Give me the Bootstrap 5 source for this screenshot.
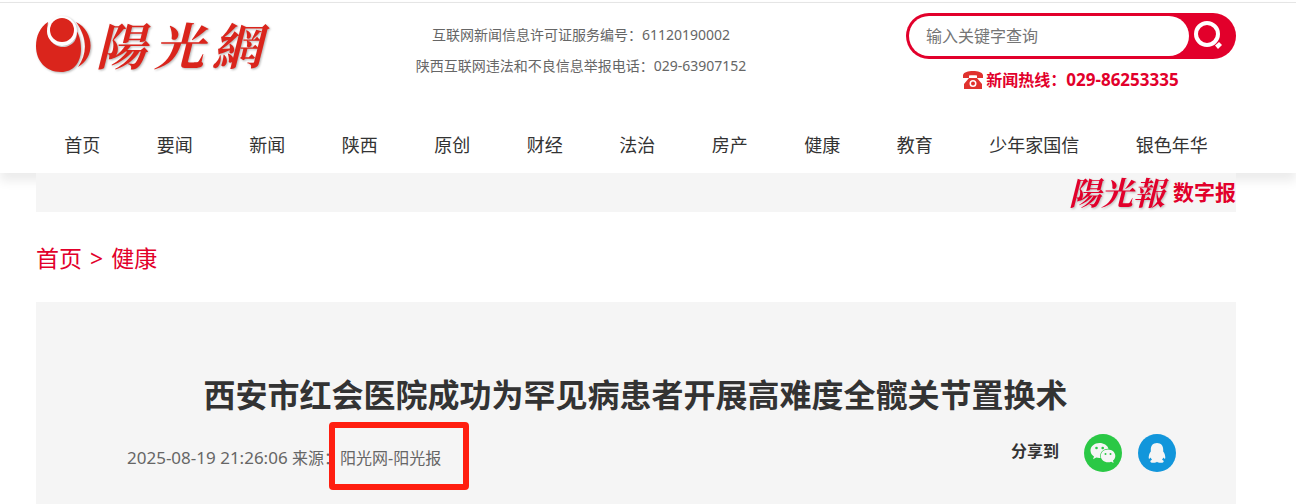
<!DOCTYPE html>
<html lang="zh-CN">
<head>
<meta charset="utf-8">
<meta name="viewport" content="width=device-width, initial-scale=1">
<title>阳光网 - 健康</title>
<link href="https://cdn.jsdelivr.net/npm/bootstrap@5.3.0/dist/css/bootstrap.min.css" rel="stylesheet">
<style>
  :root { --brand: #e2002b; --panel: #f5f5f5; }
  body { font-family: "Noto Sans", "Noto Sans CJK SC", sans-serif; color: #333; background: #fff; font-size: 16px; line-height: 24px; }
  a { text-decoration: none; color: inherit; }
  .page-wrap { padding-left: 36px; padding-right: 60px; }
  .site-header { border-top: 1px solid #e5e5e5; margin-top: 2px; background: #fff; box-shadow: 0 8px 10px rgba(0,0,0,.08); }
  .header-top { padding-top: 10px; height: 115px; }
  .brand-logo { width: 360px; color: #da251c; filter: drop-shadow(1px 1px 1px rgba(0,0,0,.3)); }
  .brush { font-family: "Noto Serif CJK TC", "Noto Sans CJK TC", sans-serif; font-style: italic; font-weight: 700; }
  .brand-word { font-size: 50px; line-height: 60px; gap: 8px; }
  .license { width: 370px; font-size: 14px; line-height: 31px; color: #666; padding-top: 6px; }
  .search-box { width: 330px; height: 46px; background: var(--brand); padding: 3px; }
  .search-box .form-control { width: 280px; flex: none; height: 40px; padding: 0 17px; border: 0; color: #757575; }
  .search-box .form-control::placeholder { color: #757575; }
  .hotline { color: var(--brand); font-weight: 700; padding-top: 9px; gap: 3px; }
  .latin { font-size: 17px; }
  .main-nav { font-size: 18px; height: 55px; padding-top: 14px; }
  .main-nav .nav-link { padding: 0; color: #333; line-height: 27px; }
  .epaper { background: var(--panel); height: 39px; color: var(--brand); gap: 8px; }
  .epaper .brush { font-size: 32px; line-height: 36px; filter: drop-shadow(1px 1px 1px rgba(0,0,0,.25)); }
  .epaper-label { font-size: 21px; font-weight: 700; line-height: 39px; }
  .crumbs { font-size: 23px; line-height: 34px; color: var(--brand); padding-top: 29px; gap: 8px; margin-bottom: 27px; }
  .article { background: var(--panel); padding: 69px 60px 32px 91px; min-height: 202px; }
  .article h1 { font-size: 32px; line-height: 48px; font-weight: 700; margin: 0 0 15px; padding-right: 32px; text-align: center; }
  .meta { color: #666; padding-top: 12px; }
  .highlight { position: absolute; top: -24px; bottom: -20px; left: -11px; right: -28px; border: 6px solid #ff1e10; border-radius: 4px; pointer-events: none; }
  .share-label { font-weight: 700; line-height: 34px; margin-right: 25px; }
</style>
</head>
<body>
<header class="site-header">
  <div class="page-wrap">
    <div class="header-top d-flex">
      <a href="#" class="brand-logo d-flex align-items-start">
        <svg width="56" height="62" viewBox="0 0 56 62" aria-hidden="true">
          <path d="M12 9C4 14 0 23 0 33C0 48 10 59 25 59C37 59 45 50 45 36C45 28 43 21 40 17C43 26 36 34 27 34C17 34 9 24 12 9Z" fill="#da251c"/>
          <circle cx="26" cy="18" r="15" fill="#fff"/>
          <circle cx="26" cy="17" r="12" fill="#da251c"/>
          <path d="M40 9C58 18 60 44 42 54C52 40 51 24 40 9Z" fill="#da251c"/>
        </svg>
        <span class="brush brand-word d-flex ms-1"><span>陽</span><span>光</span><span>網</span></span>
      </a>
      <div class="license text-center">
        <div>互联网新闻信息许可证服务编号：61120190002</div>
        <div>陕西互联网违法和不良信息举报电话：029-63907152</div>
      </div>
      <div class="ms-auto">
        <form class="search-box rounded-pill d-flex">
          <input type="search" class="form-control rounded-pill" placeholder="输入关键字查询" aria-label="输入关键字查询">
          <button type="submit" class="btn p-0 border-0" aria-label="搜索">
            <svg class="d-block" width="36" height="40" viewBox="0 0 36 40" aria-hidden="true">
              <circle cx="18" cy="18" r="11" fill="none" stroke="#fff" stroke-width="4"/>
              <path d="M26 29.500L30 26L33 29L29 33Z" fill="#fff"/>
            </svg>
          </button>
        </form>
        <div class="hotline d-flex align-items-center justify-content-center">
          <svg width="20" height="20" viewBox="0 0 20 20" fill="#e0322e" aria-hidden="true">
            <path d="M0 8V5C1 2 5 1 10 1S19 2 20 5V8H14V5.500C12 5 8 5 6 5.500V8Z"/>
            <path fill-rule="evenodd" d="M6 8H14L19 14V19H1V14ZM10 10A3.500 3.500 0 1 0 10 17A3.500 3.500 0 1 0 10 10Z"/>
            <circle cx="10" cy="13.500" r="2"/>
          </svg>
          <span>新闻热线：<span class="latin">029-86253335</span></span>
        </div>
      </div>
    </div>
    <nav class="main-nav nav justify-content-around flex-nowrap text-nowrap">
      <a class="nav-link" href="#">首页</a>
      <a class="nav-link" href="#">要闻</a>
      <a class="nav-link" href="#">新闻</a>
      <a class="nav-link" href="#">陕西</a>
      <a class="nav-link" href="#">原创</a>
      <a class="nav-link" href="#">财经</a>
      <a class="nav-link" href="#">法治</a>
      <a class="nav-link" href="#">房产</a>
      <a class="nav-link" href="#">健康</a>
      <a class="nav-link" href="#">教育</a>
      <a class="nav-link" href="#">少年家国信</a>
      <a class="nav-link" href="#">银色年华</a>
    </nav>
  </div>
</header>
<main class="page-wrap">
  <a href="#" class="epaper position-relative d-flex justify-content-end">
    <span class="brush">陽光報</span>
    <span class="epaper-label">数字报</span>
  </a>
  <nav class="crumbs d-flex" aria-label="当前位置">
    <a href="#">首页</a><span>&gt;</span><a href="#">健康</a>
  </nav>
  <article class="article">
    <h1>西安市红会医院成功为罕见病患者开展高难度全髋关节置换术</h1>
    <div class="d-flex justify-content-between">
      <div class="meta"><span class="latin">2025-08-19 21:26:06 </span>来源：<span class="position-relative d-inline-block">阳光网-阳光报<span class="highlight"></span></span></div>
      <div class="d-flex">
        <span class="share-label">分享到</span>
        <a href="#" class="me-3" aria-label="微信">
          <svg class="d-block" width="38" height="38" viewBox="0 0 38 38" aria-hidden="true">
            <circle cx="19" cy="19" r="19" fill="#2ac845"/>
            <path d="M15.500 9C10.500 9 6.500 12.200 6.500 16.500C6.500 19 7.800 21 10 22.500L9 25.200L12.300 23.600Q14.500 24.300 16.500 24C15 19 19 14.500 24.500 14.700C23.500 11.300 19.800 9 15.500 9Z" fill="#f5f5f5"/>
            <path d="M24 15.500C19.800 15.500 16.800 18.300 16.800 21.900C16.800 25.500 20 28.200 24 28.200Q25.800 28.200 27.200 27.700L29.600 29L29 26.500C30.500 25.400 31.300 23.700 31.300 21.900C31.300 18.300 28 15.500 24 15.500Z" fill="#f5f5f5"/>
            <g fill="#2ac845"><circle cx="12.500" cy="14" r="1.300"/><circle cx="18.700" cy="14" r="1.300"/><circle cx="21.500" cy="20" r="1"/><circle cx="26.500" cy="20" r="1"/></g>
          </svg>
        </a>
        <a href="#" aria-label="QQ">
          <svg class="d-block" width="38" height="38" viewBox="0 0 38 38" aria-hidden="true">
            <circle cx="19" cy="19" r="19" fill="#1296db"/>
            <path d="M19 9C15 9 12.800 11.800 12.800 15.500V17.500C11.500 19 10.700 21.500 10.700 23.500C10.700 25.300 11.500 25 12.700 23.500Q13.200 25 14 25.800C12.500 26.500 12 27 12.500 28C14 29.300 18 29 19 27.800C20 29 24 29.300 25.500 28C26 27 25.500 26.500 24 25.800Q24.800 25 25.300 23.500C26.500 25 27.300 25.300 27.300 23.500C27.300 21.500 26.500 19 25.200 17.500V15.500C25.200 11.800 23 9 19 9Z" fill="#f5f5f5"/>
          </svg>
        </a>
      </div>
    </div>
  </article>
</main>
<script src="https://cdn.jsdelivr.net/npm/bootstrap@5.3.0/dist/js/bootstrap.bundle.min.js"></script>
</body>
</html>
